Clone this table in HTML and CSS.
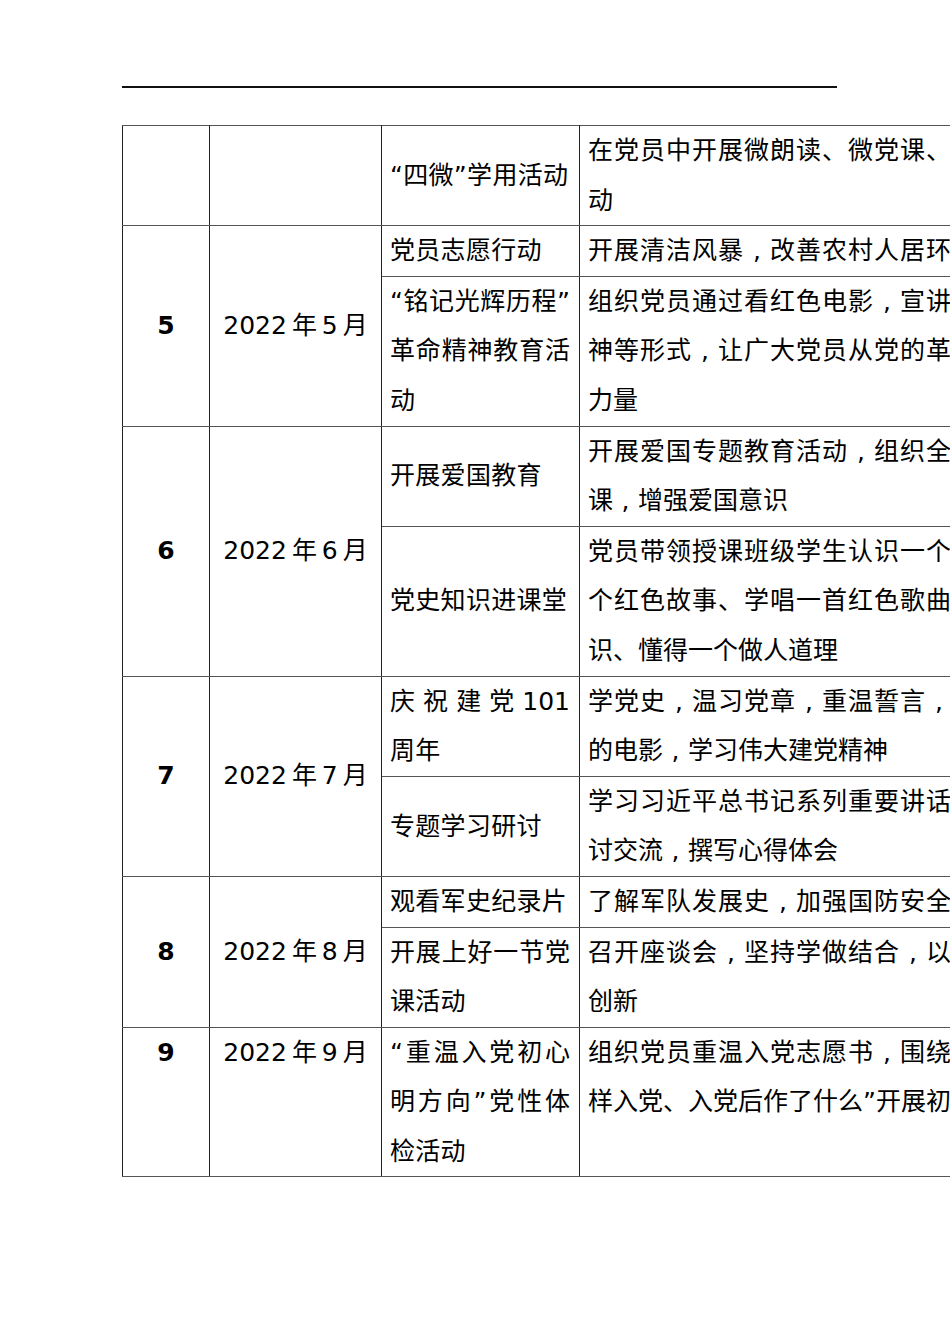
FILE: index.html
```html
<!DOCTYPE html>
<html lang="zh-CN">
<head>
<meta charset="utf-8">
<title>党建活动安排</title>
<link rel="stylesheet" href="styles.css">
</head>
<body>
<div class="page">
  <div class="rule"></div>
  <table class="plan">
    <colgroup>
      <col class="c-num">
      <col class="c-date">
      <col class="c-act">
      <col class="c-desc">
    </colgroup>
    <tr>
      <td class="num"></td>
      <td class="date"></td>
      <td class="act"><div class="ln">“四微”学用活动</div></td>
      <td class="desc top"><div class="ln w">在党员中开展微朗读、微党课、微视频、微宣讲等学用活</div><div class="ln">动</div></td>
    </tr>
    <tr>
      <td class="num" rowspan="2">5</td>
      <td class="date" rowspan="2">2022 年 5 月</td>
      <td class="act"><div class="ln">党员志愿行动</div></td>
      <td class="desc"><div class="ln w">开展清洁风暴<span class="cm">,</span>改善农村人居环境<span class="cm">,</span>建设美丽乡村</div></td>
    </tr>
    <tr>
      <td class="act"><div class="ln j">“铭记光辉历程”</div><div class="ln j">革命精神教育活</div><div class="ln">动</div></td>
      <td class="desc top"><div class="ln w">组织党员通过看红色电影<span class="cm">,</span>宣讲红色故事<span class="cm">,</span>传承红色精</div><div class="ln w">神等形式<span class="cm">,</span>让广大党员从党的革命历史中汲取奋进</div><div class="ln">力量</div></td>
    </tr>
    <tr>
      <td class="num" rowspan="2">6</td>
      <td class="date" rowspan="2">2022 年 6 月</td>
      <td class="act"><div class="ln">开展爱国教育</div></td>
      <td class="desc top"><div class="ln w">开展爱国专题教育活动<span class="cm">,</span>组织全体党员上一堂爱国主义</div><div class="ln">课<span class="cm">,</span>增强爱国意识</div></td>
    </tr>
    <tr>
      <td class="act"><div class="ln">党史知识进课堂</div></td>
      <td class="desc top"><div class="ln w">党员带领授课班级学生认识一个英雄人物、讲述一</div><div class="ln w">个红色故事、学唱一首红色歌曲、学习一个党史知</div><div class="ln">识、懂得一个做人道理</div></td>
    </tr>
    <tr>
      <td class="num" rowspan="2">7</td>
      <td class="date" rowspan="2">2022 年 7 月</td>
      <td class="act"><div class="ln j">庆祝建党101</div><div class="ln">周年</div></td>
      <td class="desc top"><div class="ln w">学党史<span class="cm">,</span>温习党章<span class="cm">,</span>重温誓言<span class="cm">,</span>观看一部反映建党历程</div><div class="ln">的电影<span class="cm">,</span>学习伟大建党精神</div></td>
    </tr>
    <tr>
      <td class="act"><div class="ln">专题学习研讨</div></td>
      <td class="desc top"><div class="ln w">学习习近平总书记系列重要讲话精神<span class="cm">,</span>开展专题研</div><div class="ln">讨交流<span class="cm">,</span>撰写心得体会</div></td>
    </tr>
    <tr>
      <td class="num" rowspan="2">8</td>
      <td class="date" rowspan="2">2022 年 8 月</td>
      <td class="act"><div class="ln">观看军史纪录片</div></td>
      <td class="desc"><div class="ln w">了解军队发展史<span class="cm">,</span>加强国防安全教育<span class="cm">,</span>增强国防意识</div></td>
    </tr>
    <tr>
      <td class="act"><div class="ln j">开展上好一节党</div><div class="ln">课活动</div></td>
      <td class="desc top"><div class="ln w">召开座谈会<span class="cm">,</span>坚持学做结合<span class="cm">,</span>以学促做<span class="cm">,</span>推动工作</div><div class="ln">创新</div></td>
    </tr>
    <tr>
      <td class="num top">9</td>
      <td class="date top">2022 年 9 月</td>
      <td class="act top"><div class="ln j">“重温入党初心</div><div class="ln j">明方向”党性体</div><div class="ln">检活动</div></td>
      <td class="desc top"><div class="ln w">组织党员重温入党志愿书<span class="cm">,</span>围绕“为什么入党、怎</div><div class="ln">样入党、入党后作了什么”开展初心检视</div></td>
    </tr>
  </table>
</div>
</body>
</html>
```

FILE: styles.css
```css
html, body {
  margin: 0;
  padding: 0;
  background: #fff;
}

.page {
  width: 950px;
  height: 1344px;
  overflow: hidden;
  padding: 86px 0 0 122px;
  box-sizing: border-box;
  font-family: "DejaVu Sans", "Noto Sans CJK SC", sans-serif;
  font-size: 25px;
  color: #000;
}

.rule {
  width: 715px;
  height: 2px;
  background: #111;
  margin-bottom: 37px;
}

.plan {
  border-collapse: collapse;
  table-layout: fixed;
  width: 1057px;
}

.c-num { width: 87px; }
.c-date { width: 172px; }
.c-act { width: 198px; }
.c-desc { width: 600px; }

.plan td {
  border-left: 1px solid #222;
  border-right: 1px solid #222;
  border-top: 1px solid #555;
  border-bottom: 1px solid #555;
  padding: 0;
  line-height: 49.6px;
  vertical-align: middle;
  overflow: hidden;
}

.plan td.top {
  vertical-align: top;
}

.num {
  text-align: center;
  font-weight: bold;
}

.date {
  text-align: center;
  word-spacing: -3px;
}

.act {
  padding: 0 9px 0 8px !important;
  letter-spacing: 0.3px;
}

.desc {
  padding: 0 0 0 8px !important;
}

.ln {
  white-space: nowrap;
  height: 49.6px;
}

.j {
  text-align: justify;
  text-align-last: justify;
  letter-spacing: 0;
}

.w {
  letter-spacing: 1px;
}

.cm {
  display: inline-block;
  width: 25px;
  text-align: center;
  letter-spacing: 0;
}

.w .cm {
  width: 26px;
}
```
